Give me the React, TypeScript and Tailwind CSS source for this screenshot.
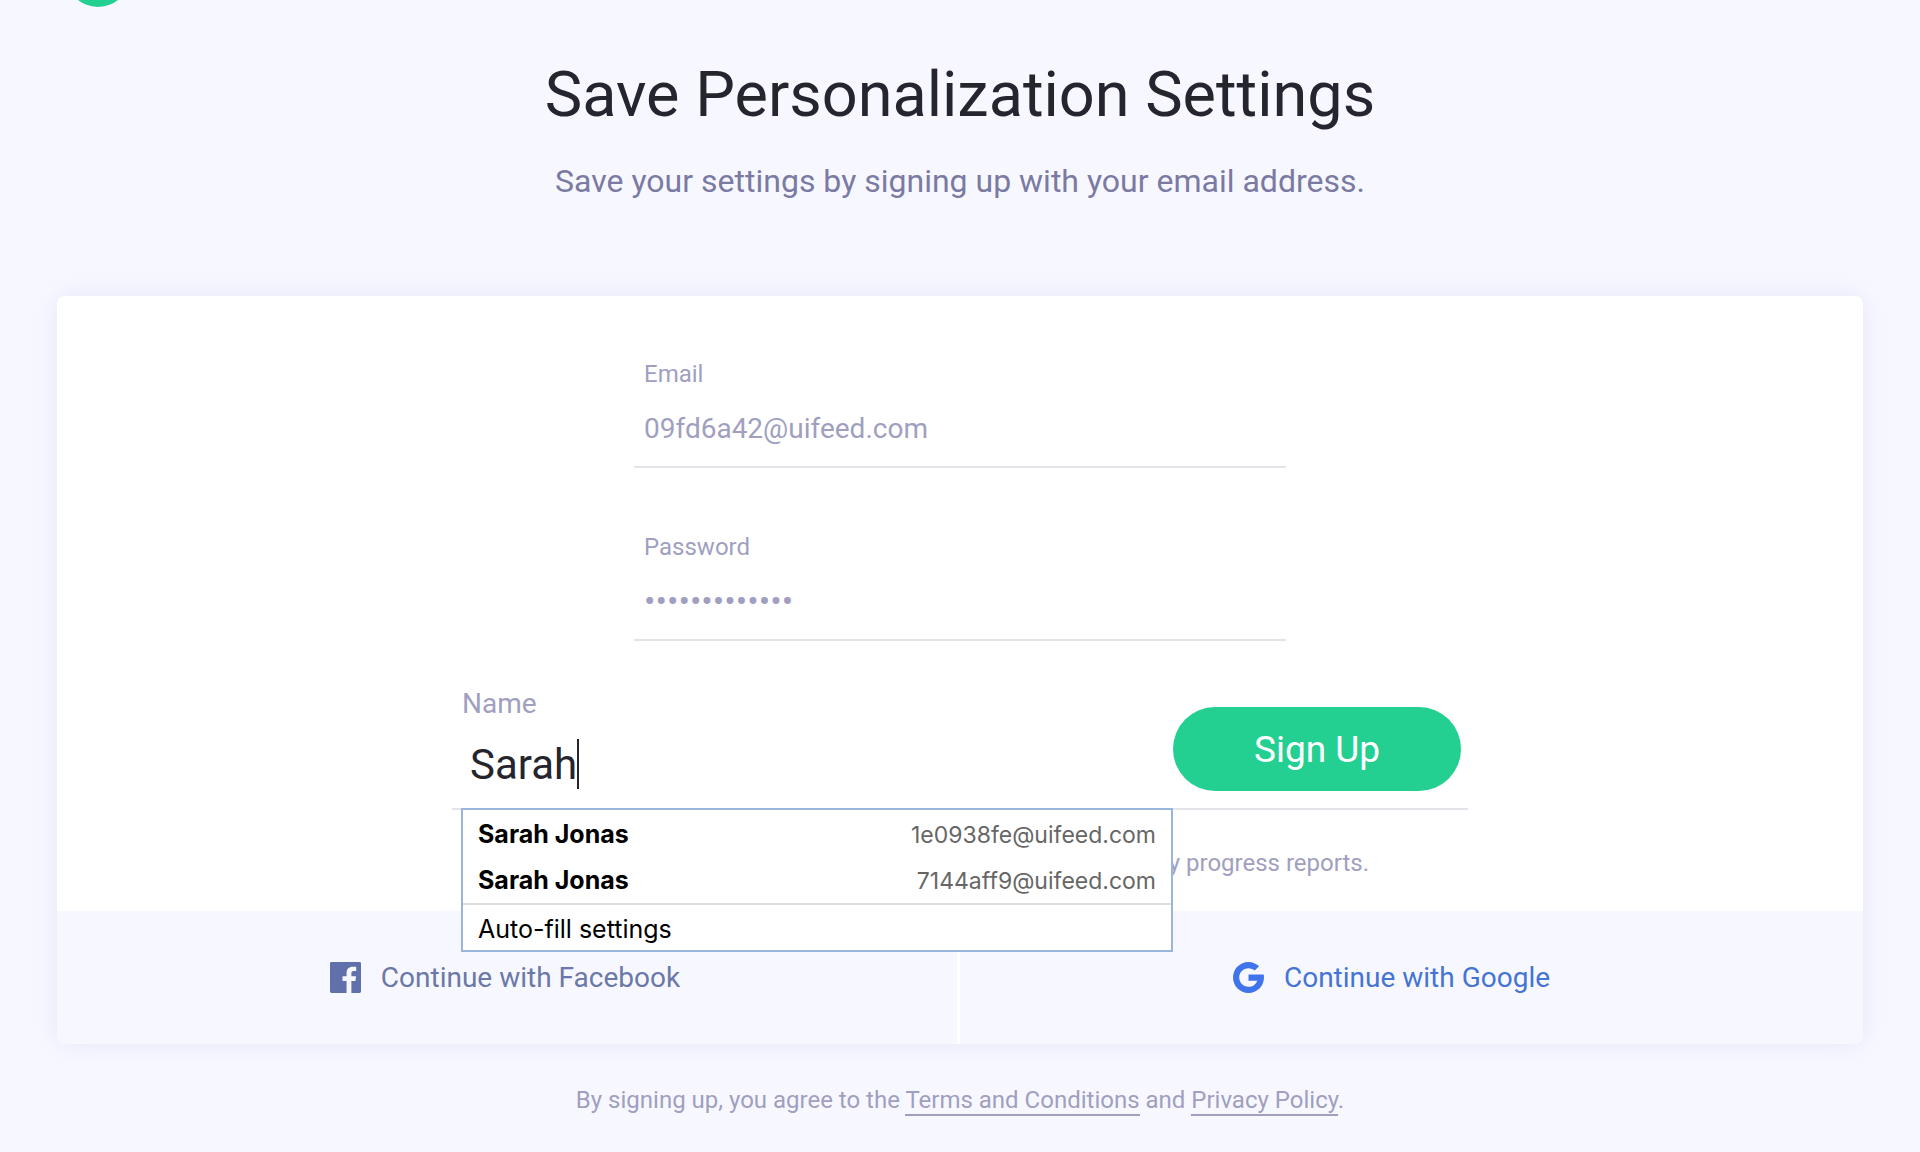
import { useState } from "react";

interface Suggestion {
  name: string;
  email: string;
}

const suggestions: Suggestion[] = [
  { name: "Sarah Jonas", email: "1e0938fe@uifeed.com" },
  { name: "Sarah Jonas", email: "7144aff9@uifeed.com" },
];

const FacebookIcon = () => (
  <svg viewBox="0 0 24 24" className="w-[31px] h-[31px] fill-[#6070aa]" aria-hidden="true">
    <path d="M22.9 0H1.1C.5 0 0 .5 0 1.1v21.8C0 23.5.5 24 1.1 24h11.718v-9.294H9.689v-3.621h3.129V8.41c0-3.099 1.894-4.785 4.659-4.785 1.325 0 2.464.097 2.796.141v3.24h-1.921c-1.5 0-1.792.721-1.792 1.771v2.311h3.584l-.465 3.63H16.56V24h6.34c.6 0 1.1-.5 1.1-1.1V1.1C24 .5 23.5 0 22.9 0" />
  </svg>
);

const GoogleIcon = () => (
  <svg viewBox="4 4 40 40" className="w-[31px] h-[31px] fill-[#3f74ea]" aria-hidden="true">
    <path d="M43.611 20.083H24v8h11.303c-1.649 4.657-6.08 8-11.303 8-6.627 0-12-5.373-12-12s5.373-12 12-12c3.059 0 5.842 1.154 7.961 3.039l5.657-5.657C34.046 6.053 29.268 4 24 4 12.955 4 4 12.955 4 24s8.955 20 20 20 20-8.955 20-20c0-1.341-.138-2.65-.389-3.917z" />
  </svg>
);

const App: React.FC = () => {
  const [email, setEmail] = useState("09fd6a42@uifeed.com");
  const [password, setPassword] = useState("sarahjonas123");
  const [name, setName] = useState("Sarah");

  return (
    <div className="min-h-screen flex flex-col bg-[#f7f8ff] font-[Roboto,sans-serif] text-[#a09fbf]">
      <div className="w-16 h-16 -mt-[57px] ml-[66px] rounded-full bg-[#24d091]"></div>
      <h1 className="mt-[52px] text-center text-[63px] leading-[72px] text-[#25262d]">
        Save Personalization Settings
      </h1>
      <p className="mt-[30px] text-center text-[32px] leading-10 text-[#7b7aa3]">
        Save your settings by signing up with your email address.
      </p>

      <form
        className="mt-[95px] mx-[57px] rounded-lg bg-white shadow-[0_0_28px_rgba(90,80,180,0.11)]"
        onSubmit={(e) => e.preventDefault()}
      >
        <div className="flex flex-col items-center pt-16 pb-[34px]">
          <div className="w-[652px] flex flex-col">
            <label htmlFor="email" className="px-2.5 text-2xl leading-7">
              Email
            </label>
            <input
              id="email"
              type="email"
              className="h-20 px-2.5 pt-0.5 border-b-2 border-[#e3e3ea] text-[28px] outline-none"
              value={email}
              onChange={(e) => setEmail(e.target.value)}
            />
            <label htmlFor="password" className="mt-[65px] px-2.5 text-2xl leading-7">
              Password
            </label>
            <input
              id="password"
              type="password"
              className="h-20 px-2.5 pt-0.5 border-b-2 border-[#e3e3ea] text-[34px] outline-none"
              value={password}
              onChange={(e) => setPassword(e.target.value)}
            />
          </div>

          <div className="relative w-[1016px] mt-[46px] flex justify-between items-end border-b-2 border-[#e3e3ea]">
            <div className="flex flex-col pb-[19px]">
              <label htmlFor="name" className="pl-2.5 text-[28px] leading-[34px]">
                Name
              </label>
              <div className="mt-[18px] pl-[18px] flex items-center">
                <input
                  id="name"
                  type="text"
                  autoComplete="off"
                  className="field-sizing-content h-[50px] text-[42px] text-[#25262d] outline-none"
                  value={name}
                  onChange={(e) => setName(e.target.value)}
                />
                <span className="w-0.5 h-[50px] bg-[#25262d]"></span>
              </div>
            </div>
            <button
              type="submit"
              className="w-72 h-[84px] mr-[7px] mb-[17px] pt-0.5 rounded-full bg-[#24d091] text-[37px] text-white"
            >
              Sign Up
            </button>

            {/* autofill menu */}
            <div className="absolute z-10 top-full left-[9px] right-[295px] border-2 border-[#9bb5da] bg-white pt-px font-[Inter,sans-serif] text-[25px] text-black">
              {suggestions.map((s) => (
                <button
                  key={s.email}
                  type="button"
                  className="w-full h-[46px] px-[15px] pt-0.5 flex justify-between items-center"
                  onClick={() => setName(s.name)}
                >
                  <span className="font-bold">{s.name}</span>
                  <span className="text-[23px] text-[#666666]">{s.email}</span>
                </button>
              ))}
              <button
                type="button"
                className="w-full h-[47px] px-[15px] pt-1 flex items-center border-t-2 border-[#dcdcdc]"
              >
                Auto-fill settings
              </button>
            </div>
          </div>

          <p className="w-[1016px] mt-[39px] pr-[99px] text-right text-2xl leading-7">
            y progress reports.
          </p>
        </div>

        <div className="h-[133px] flex rounded-b-lg bg-[#f7f8ff] text-[28px]">
          <a
            href="#facebook"
            className="w-1/2 pr-1 flex justify-center items-center gap-5 border-r-3 border-white text-[#6b78a8]"
          >
            <FacebookIcon />
            Continue with Facebook
          </a>
          <a
            href="#google"
            className="w-1/2 pr-10 flex justify-center items-center gap-5 text-[#4574d4]"
          >
            <GoogleIcon />
            Continue with Google
          </a>
        </div>
      </form>

      <p className="mt-[42px] text-center text-2xl leading-7">
        By signing up, you agree to the{" "}
        <a href="#terms" className="border-b-2 border-[#a09fbf]">
          Terms and Conditions
        </a>{" "}
        and{" "}
        <a href="#privacy" className="border-b-2 border-[#a09fbf]">
          Privacy Policy
        </a>
        .
      </p>
    </div>
  );
};

export default App;
